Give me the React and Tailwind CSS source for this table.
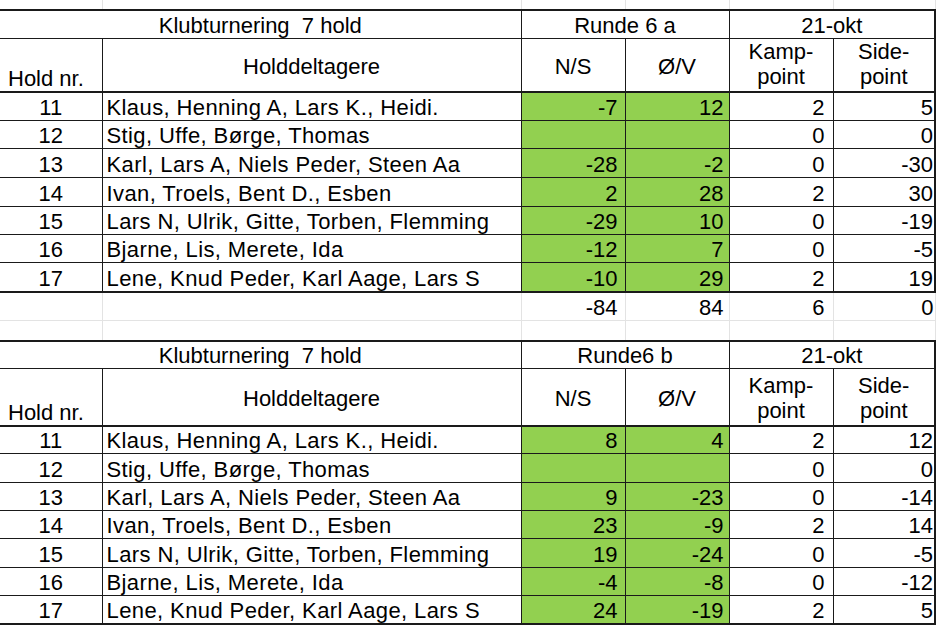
const roundA = [
  { nr: 11, names: "Klaus, Henning A, Lars K., Heidi.", ns: "-7", ov: "12", kamp: "2", side: "5", h: "h-[29px]" },
  { nr: 12, names: "Stig, Uffe, Børge, Thomas", ns: "", ov: "", kamp: "0", side: "0", h: "h-[28px]" },
  { nr: 13, names: "Karl, Lars A, Niels Peder, Steen Aa", ns: "-28", ov: "-2", kamp: "0", side: "-30", h: "h-[29px]" },
  { nr: 14, names: "Ivan, Troels, Bent D., Esben", ns: "2", ov: "28", kamp: "2", side: "30", h: "h-[29px]" },
  { nr: 15, names: "Lars N, Ulrik, Gitte, Torben, Flemming", ns: "-29", ov: "10", kamp: "0", side: "-19", h: "h-[28px]" },
  { nr: 16, names: "Bjarne, Lis, Merete, Ida", ns: "-12", ov: "7", kamp: "0", side: "-5", h: "h-[28px]" },
  { nr: 17, names: "Lene, Knud Peder, Karl Aage, Lars S", ns: "-10", ov: "29", kamp: "2", side: "19", h: "h-[29px]" },
];

const roundB = [
  { nr: 11, names: "Klaus, Henning A, Lars K., Heidi.", ns: "8", ov: "4", kamp: "2", side: "12", h: "h-[28px]" },
  { nr: 12, names: "Stig, Uffe, Børge, Thomas", ns: "", ov: "", kamp: "0", side: "0", h: "h-[29px]" },
  { nr: 13, names: "Karl, Lars A, Niels Peder, Steen Aa", ns: "9", ov: "-23", kamp: "0", side: "-14", h: "h-[28px]" },
  { nr: 14, names: "Ivan, Troels, Bent D., Esben", ns: "23", ov: "-9", kamp: "2", side: "14", h: "h-[28px]" },
  { nr: 15, names: "Lars N, Ulrik, Gitte, Torben, Flemming", ns: "19", ov: "-24", kamp: "0", side: "-5", h: "h-[29px]" },
  { nr: 16, names: "Bjarne, Lis, Merete, Ida", ns: "-4", ov: "-8", kamp: "0", side: "-12", h: "h-[28px]" },
  { nr: 17, names: "Lene, Knud Peder, Karl Aage, Lars S", ns: "24", ov: "-19", kamp: "2", side: "5", h: "h-[28px]" },
];

// blank spreadsheet row with the light gridlines only
function GapRow({ h }) {
  return (
    <tr className={h}>
      <td className="border-r border-[#e3e3e3]"></td>
      <td className="border-r border-[#e3e3e3]"></td>
      <td className="border-r border-[#e3e3e3]"></td>
      <td className="border-r border-[#e3e3e3]"></td>
      <td className="border-r border-[#e3e3e3]"></td>
      <td className="border-r border-[#e3e3e3]"></td>
    </tr>
  );
}

function Block({ runde, rows, headH }) {
  return (
    <>
      <tr className="h-[28px]">
        <td colSpan={2} className="border-t-2 border-b border-r border-[#1a1a1a] text-center align-bottom whitespace-pre">
          Klubturnering  7 hold
        </td>
        <td colSpan={2} className="border-t-2 border-b border-r border-[#1a1a1a] text-center align-bottom">
          {runde}
        </td>
        <td colSpan={2} className="border-t-2 border-b border-r-2 border-[#1a1a1a] text-center align-bottom">
          21-okt
        </td>
      </tr>
      <tr className={headH}>
        <td className="border-b-2 border-r border-[#1a1a1a] pl-2 text-left align-bottom whitespace-nowrap">Hold nr.</td>
        <td className="border-b-2 border-r border-[#1a1a1a] text-center align-middle pt-1">Holddeltagere</td>
        <td className="border-b-2 border-r border-[#1a1a1a] text-center align-middle pt-1">N/S</td>
        <td className="border-b-2 border-r border-[#1a1a1a] text-center align-middle pt-1">Ø/V</td>
        <td className="border-b-2 border-r border-[#1a1a1a] text-center align-bottom pb-[2px]">
          Kamp-<br />point
        </td>
        <td className="border-b-2 border-r-2 border-[#1a1a1a] text-center align-bottom pb-[2px]">
          Side-<br />point
        </td>
      </tr>
      {rows.map((r, i) => {
        const last = i === rows.length - 1;
        const b = last ? "border-b-2" : "border-b";
        return (
          <tr key={r.nr} className={r.h}>
            <td className={`${b} border-r border-[#1a1a1a] text-center align-bottom`}>{r.nr}</td>
            <td className={`${b} border-r border-[#1a1a1a] pl-1 text-left align-bottom whitespace-nowrap tracking-[0.4px]`}>{r.names}</td>
            <td className={`${b} border-r border-[#1a1a1a] bg-[#92d050] text-right align-bottom pr-[7px]`}>{r.ns}</td>
            <td className={`${b} border-r border-[#1a1a1a] bg-[#92d050] text-right align-bottom pr-[5px]`}>{r.ov}</td>
            <td className={`${b} border-r border-[#1a1a1a] text-right align-bottom pr-[8px]`}>{r.kamp}</td>
            <td className={`${b} border-r-2 border-[#1a1a1a] text-right align-bottom pr-[1px]`}>{r.side}</td>
          </tr>
        );
      })}
    </>
  );
}

export default function App() {
  return (
    <div className="w-[940px] h-[625px] overflow-hidden bg-white text-black text-[22px] leading-[25px] font-['Liberation_Sans',Arial,sans-serif]">
      <table className="table-fixed border-collapse w-[935px]">
        <colgroup>
          <col className="w-[102px]" />
          <col className="w-[419px]" />
          <col className="w-[104px]" />
          <col className="w-[104px]" />
          <col className="w-[104px]" />
          <col className="w-[102px]" />
        </colgroup>
        <tbody>
          <GapRow h="h-[10px]" />
          <Block runde="Runde 6 a" rows={roundA} headH="h-[53px]" />
          <tr className="h-[29px]">
            <td className="border-r border-b border-[#e3e3e3]"></td>
            <td className="border-r border-b border-[#e3e3e3]"></td>
            <td className="border-r border-b border-[#e3e3e3] text-right align-bottom pr-[7px]">-84</td>
            <td className="border-r border-b border-[#e3e3e3] text-right align-bottom pr-[5px]">84</td>
            <td className="border-r border-b border-[#e3e3e3] text-right align-bottom pr-[8px]">6</td>
            <td className="border-r border-b border-[#e3e3e3] text-right align-bottom pr-[1px]">0</td>
          </tr>
          <GapRow h="h-[20px]" />
          <Block runde="Runde6 b" rows={roundB} headH="h-[57px]" />
        </tbody>
      </table>
    </div>
  );
}
